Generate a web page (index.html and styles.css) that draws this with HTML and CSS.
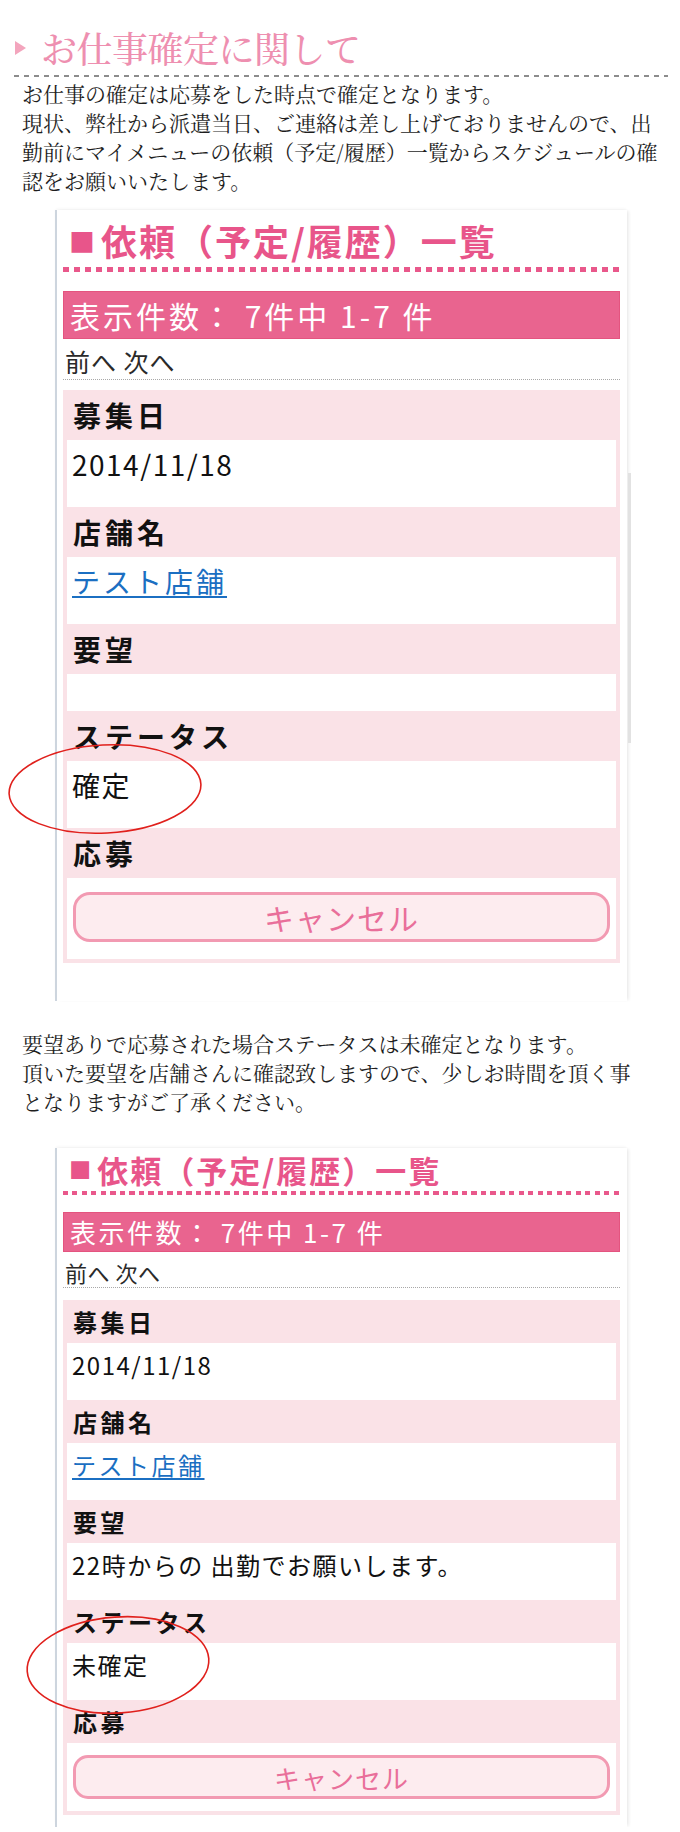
FILE: index.html
```html
<!DOCTYPE html>
<html lang="ja">
<head>
<meta charset="utf-8">
<title>お仕事確定に関して</title>
<link rel="stylesheet" href="styles.css">
</head>
<body>
<div class="page">
  <h1 class="title"><span class="tri"></span>お仕事確定に関して</h1>
  <div class="rule"></div>
  <p class="note note-a">お仕事の確定は応募をした時点で確定となります。<br>現状、弊社から派遣当日、ご連絡は差し上げておりませんので、出<br>勤前にマイメニューの依頼（予定/履歴）一覧からスケジュールの確<br>認をお願いいたします。</p>

  <section class="shot shot-a">
    <h2 class="list-title"><span class="sq">■</span>依頼（予定/履歴）一覧</h2>
    <div class="dots"></div>
    <div class="count">表示件数： 7件中 1-7 件</div>
    <div class="pager">前へ 次へ</div>
    <dl class="detail">
      <dt>募集日</dt><dd>2014/11/18</dd>
      <dt>店舗名</dt><dd><a href="#">テスト店舗</a></dd>
      <dt>要望</dt><dd class="empty"></dd>
      <dt>ステータス</dt><dd>確定</dd>
      <dt>応募</dt><dd class="btn-cell"><button class="cancel" type="button">キャンセル</button></dd>
    </dl>
    <div class="scrollbar"></div>
    <svg class="mark mark-a" width="200" height="100" viewBox="0 0 200 100"><ellipse cx="100" cy="49" rx="96" ry="44" fill="none" stroke="#e0201c" stroke-width="1.6" transform="rotate(-3 100 49)"/></svg>
  </section>

  <p class="note note-b">要望ありで応募された場合ステータスは未確定となります。<br>頂いた要望を店舗さんに確認致しますので、少しお時間を頂く事<br>となりますがご了承ください。</p>

  <section class="shot shot-b">
    <h2 class="list-title"><span class="sq">■</span>依頼（予定/履歴）一覧</h2>
    <div class="dots"></div>
    <div class="count">表示件数： 7件中 1-7 件</div>
    <div class="pager">前へ 次へ</div>
    <dl class="detail">
      <dt>募集日</dt><dd>2014/11/18</dd>
      <dt>店舗名</dt><dd><a href="#">テスト店舗</a></dd>
      <dt>要望</dt><dd>22時からの 出勤でお願いします。</dd>
      <dt>ステータス</dt><dd>未確定</dd>
      <dt>応募</dt><dd class="btn-cell"><button class="cancel" type="button">キャンセル</button></dd>
    </dl>
    <svg class="mark mark-b" width="188" height="102" viewBox="0 0 188 102"><ellipse cx="94" cy="51" rx="91" ry="48" fill="none" stroke="#e0201c" stroke-width="1.6" transform="rotate(-4 94 51)"/></svg>
  </section>
</div>
</body>
</html>
```

FILE: styles.css
```css
html, body {
  margin: 0;
  padding: 0;
  background: #fff;
}

.page {
  width: 680px;
  color: #222;
  font-family: "Noto Sans CJK JP", sans-serif;
}

/* page heading */
.title {
  display: flex;
  align-items: center;
  height: 52px;
  margin: 0;
  padding: 22px 0 0 15px;
  font-family: "Noto Serif CJK JP", "Noto Sans CJK JP", serif;
  font-weight: 500;
  font-size: 36px;
  line-height: 52px;
  letter-spacing: -0.5px;
  color: #ee8fb0;
}

.tri {
  width: 0;
  height: 0;
  margin-right: 15px;
  border-left: 11px solid #f3a5bd;
  border-top: 7px solid transparent;
  border-bottom: 7px solid transparent;
}

.rule {
  height: 2px;
  margin: 1px 12px 0 14px;
  background: repeating-linear-gradient(to right, #8c8c8c 0 5px, transparent 5px 10px);
}

/* explanatory paragraphs */
.note {
  margin: 2px 0 0 22px;
  font-family: "Noto Serif CJK JP", "Noto Sans CJK JP", serif;
  font-size: 21px;
  line-height: 29px;
  color: #1e1e1e;
  white-space: nowrap;
}

.note-b {
  margin-top: 28px;
}

/* screenshot card */
.shot {
  position: relative;
  box-sizing: border-box;
  width: 572px;
  margin: 15px 0 0 55px;
  border-left: 2px solid #cdd5de;
  background: #fff;
  box-shadow: 3px 0 3px -1px rgba(0, 0, 0, 0.07), 0 -2px 3px -1px rgba(0, 0, 0, 0.05);
}

.shot-a {
  padding: 8px 7px 38px 6px;
}

.shot-b {
  margin-top: 32px;
  padding: 3px 7px 12px 6px;
}

.list-title {
  display: flex;
  align-items: center;
  margin: 0;
  padding-left: 6px;
  font-weight: 700;
  color: #e8558a;
  white-space: nowrap;
}

.sq {
  font-size: 0.72em;
  margin-right: 6px;
  letter-spacing: 0;
}

.shot-a .list-title {
  height: 44px;
  font-size: 36px;
  letter-spacing: 2px;
}

.shot-b .list-title {
  height: 36px;
  font-size: 31px;
  letter-spacing: 2px;
}

.dots {
  background: repeating-linear-gradient(to right, #e9588b 0 6px, transparent 6px 11px);
}

.shot-a .dots {
  height: 5px;
  margin-top: 5px;
}

.shot-b .dots {
  height: 4px;
  margin-top: 4px;
  background: repeating-linear-gradient(to right, #e9588b 0 5px, transparent 5px 9.5px);
}

.count {
  box-sizing: border-box;
  padding-left: 6px;
  background: #e9648f;
  border: 1px solid #e4547f;
  color: #fff;
  white-space: nowrap;
}

.shot-a .count {
  margin-top: 19px;
  height: 48px;
  font-size: 30px;
  line-height: 46px;
  letter-spacing: 3px;
}

.shot-b .count {
  margin-top: 17px;
  height: 40px;
  font-size: 26px;
  line-height: 38px;
  letter-spacing: 2.5px;
}

.pager {
  padding-left: 2px;
  border-bottom: 1px dotted #a8a8a8;
  color: #2a2a2a;
}

.shot-a .pager {
  padding-top: 6px;
  padding-bottom: 2px;
  font-size: 25px;
  line-height: 32px;
  letter-spacing: 1px;
}

.shot-b .pager {
  padding-top: 5px;
  font-size: 22px;
  line-height: 30px;
  letter-spacing: 0.5px;
}

/* detail table */
.detail {
  margin: 0;
  padding: 0 4px 4px;
  background: #fae2e7;
}

.shot-a .detail {
  margin-top: 10px;
}

.shot-b .detail {
  margin-top: 12px;
}

.detail dt {
  padding-left: 6px;
  font-weight: 700;
  color: #111;
}

.detail dd {
  box-sizing: border-box;
  margin: 0;
  padding-left: 5px;
  background: #fff;
  color: #111;
  white-space: nowrap;
}

.shot-a dt {
  height: 50px;
  font-size: 28px;
  line-height: 50px;
  letter-spacing: 4px;
}

.shot-a dd {
  height: 67px;
  padding-top: 9px;
  font-size: 28px;
  line-height: 30px;
  letter-spacing: 1.5px;
}

.shot-a dd.empty {
  height: 37px;
}

.shot-b dt {
  height: 43px;
  font-size: 24px;
  line-height: 43px;
  letter-spacing: 3.5px;
}

.shot-b dd {
  height: 57px;
  padding-top: 8px;
  font-size: 24px;
  line-height: 27px;
  letter-spacing: 1.5px;
}

.detail a {
  color: #1b6fc2;
  text-decoration: underline;
  text-underline-offset: 3px;
  letter-spacing: 3px;
}

.shot-b .detail a {
  letter-spacing: 2.5px;
}

.detail dd.btn-cell {
  padding: 14px 6px 0;
}

.shot-a dd.btn-cell {
  height: 81px;
}

.shot-b dd.btn-cell {
  height: 68px;
  padding-top: 12px;
}

.cancel {
  display: block;
  width: 100%;
  margin: 0;
  padding: 0;
  box-sizing: border-box;
  background: #fdecef;
  border: 3px solid #f29ab2;
  color: #e96f9a;
  font-family: "Noto Sans CJK JP", sans-serif;
  letter-spacing: 1px;
}

.shot-a .cancel {
  height: 50px;
  border-radius: 17px;
  font-size: 30px;
}

.shot-b .cancel {
  height: 44px;
  border-radius: 15px;
  font-size: 26px;
}

/* overlays: browser scrollbar and red annotation circles */
.scrollbar {
  position: absolute;
  top: 263px;
  right: -4px;
  width: 3px;
  height: 270px;
  background: #e2e2e2;
}

.mark {
  position: absolute;
  overflow: visible;
}

.mark-a {
  left: -52px;
  top: 530px;
}

.mark-b {
  left: -33px;
  top: 466px;
}
```
